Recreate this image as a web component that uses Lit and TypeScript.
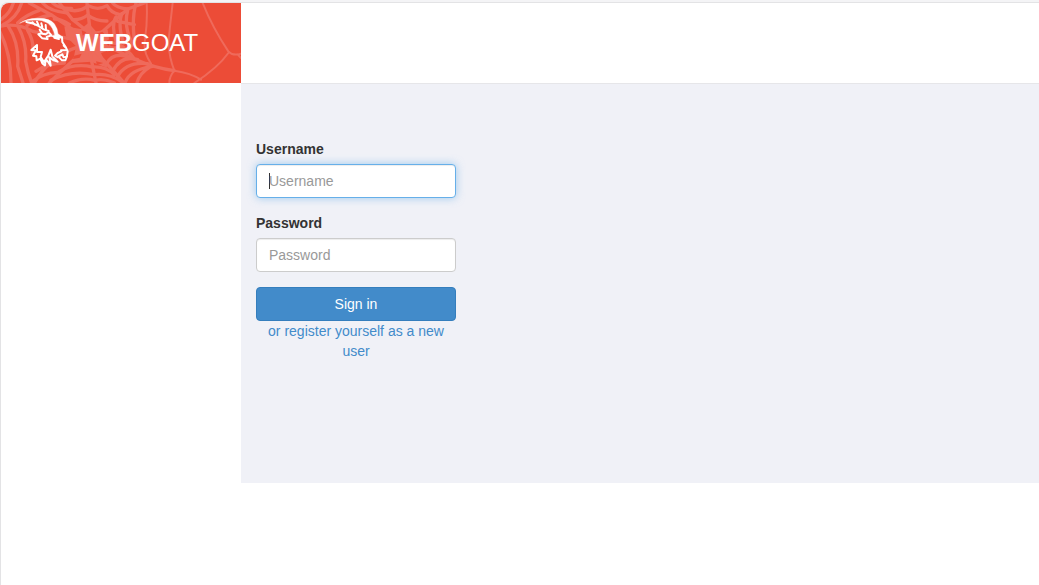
import { LitElement, html, css } from "lit";
import { customElement, query } from "lit/decorators.js";

@customElement("goat-brand")
class GoatBrand extends LitElement {
  static styles = css`
    :host {
      display: block;
      width: 240px;
    }
    .brand {
      display: grid;
      height: 80px;
      background: #ec4c37;
      border-top-left-radius: 8px;
      overflow: hidden;
      color: #fff;
      text-decoration: none;
    }
    .web,
    .mark {
      grid-area: 1 / 1;
      width: 240px;
      height: 80px;
    }
    .web {
      fill: none;
      stroke: #ef6a5b;
      stroke-width: 10;
      stroke-linecap: round;
      stroke-linejoin: round;
    }
    .hub {
      fill: #ef6a5b;
      stroke: none;
    }
    .cell {
      fill: #ec4c37;
      stroke: none;
    }
    .thin {
      stroke-width: 6;
    }
    .mark {
      fill: #fff;
      stroke: #fff;
      stroke-linejoin: round;
    }
    .line {
      fill: none;
      stroke-width: 6;
      stroke-linecap: round;
    }
    .name {
      grid-area: 1 / 1;
      z-index: 1;
      padding-left: 75px;
      font-size: 24px;
      line-height: 80px;
    }
  `;

  render() {
    return html`
      <a class="brand" href="#">
        <svg class="web" viewBox="0 0 720 240" aria-hidden="true">
          <path class="hub" d="M190 70L240 78L262 60L285 85L320 80L325 115L330 140L300 150L320 195L270 176L215 180L225 130L195 100Z" />
          <path d="M0 69Q50 60 95 85L220 110M85 0L150 35L245 100M175 0L215 50L265 90M258 0L268 90M300 90L380 18M430 0L380 18M280 110L400 168Q460 195 520 203M270 130L370 240M265 140L285 240M255 140Q205 180 145 240M235 130Q145 160 100 240" />
          <path d="M0 50Q28 30 37 0M5 66Q48 45 62 0M-4 85Q30 150 30 240M22 70Q55 120 50 190L66 240M52 72Q78 120 74 175Q80 210 92 240M80 82Q100 115 95 150" />
          <path d="M50 60Q75 35 115 22M78 68Q100 45 150 36M125 0Q145 25 200 30M155 0Q175 18 212 16M160 48Q180 48 205 64M215 50Q240 52 260 36Q285 55 318 54" />
          <path d="M200 20Q235 30 262 8Q290 24 318 8Q330 30 355 34M335 0Q345 14 380 18M345 42Q330 65 345 115M362 32Q350 70 368 120M380 22Q368 70 392 118" />
          <path d="M310 128Q345 108 375 140M320 140Q370 120 400 168M315 185Q335 145 385 162M335 205Q360 155 410 170M350 220Q375 175 440 182M372 240Q385 200 455 190M408 240Q415 210 450 190" />
          <path d="M175 205Q220 180 275 192Q315 190 340 215M150 232Q210 200 280 215Q325 210 362 236M205 240Q245 222 282 232Q310 225 340 240M105 205Q140 180 190 180M95 235Q125 210 170 208" />
          <path class="cell" d="M242 82L256 88L245 98ZM287 92L304 86L313 96L300 102ZM310 118L326 108L324 128ZM285 175L307 180L288 186ZM220 158L242 152L236 164L216 168Z" />
          <path d="M405 0Q392 45 400 110M402 110Q390 130 375 155M350 55L400 65" />
          <path class="thin" d="M437 0Q440 55 432 110Q425 145 450 182M515 0Q508 60 502 120Q505 165 520 203Q505 220 505 240M605 0Q635 75 682 145Q695 160 720 152M682 150Q650 195 580 240M520 203Q570 210 600 230M710 154L720 165" />
        </svg>
        <svg class="mark" viewBox="0 0 720 240" aria-hidden="true">
          <path d="M56 61Q78 45 112 46Q145 45 160 62Q170 76 171 92L184 101L182 106L160 104L149 99L161 97Q157 74 141 61Q124 50 99 51Q75 51 56 61Z" />
          <path class="line" d="M76 57Q98 60 112 69L128 79L143 84M94 58L102 65M108 56L113 67M121 61L124 73M134 66L135 80" />
          <path class="line" d="M116 80L123 91L112 94L124 106L140 108M124 92L134 94L143 87L151 97L137 102M160 104L174 108M183 103L184 117L195 134L200 145L198 158M180 142L195 141M188 128L194 134" />
          <path class="line" d="M181 145L170 150L162 158L169 162L184 154L188 163L198 160L193 172L183 172L175 164M108 126L91 141L105 142L96 158L106 160L107 172L118 167L124 181L132 187L135 168L149 188L145 163L158 172L170 176L154 160L149 140L142 158L129 177L119 162L123 147L108 147Z" />
        </svg>
        <span class="name"><b>WEB</b>GOAT</span>
      </a>
    `;
  }
}

@customElement("login-form")
class LoginForm extends LitElement {
  static styles = css`
    :host {
      display: block;
      width: 200px;
    }
    * {
      box-sizing: border-box;
    }
    .form,
    .group {
      display: flex;
      flex-direction: column;
    }
    .group {
      margin-bottom: 15px;
    }
    .label {
      margin-bottom: 5px;
      font-weight: 700;
    }
    .control {
      width: 100%;
      height: 34px;
      padding: 6px 12px;
      border: 1px solid #ccc;
      border-radius: 4px;
      background: #fff;
      box-shadow: inset 0 1px 1px rgba(0, 0, 0, 0.075);
      color: #555;
      font: inherit;
    }
    .control::placeholder {
      color: #999;
      opacity: 1;
    }
    .control:focus {
      outline: 0;
      border-color: #66afe9;
      box-shadow: inset 0 1px 1px rgba(0, 0, 0, 0.075),
        0 0 8px rgba(102, 175, 233, 0.6);
    }
    /* A steady caret in the empty focused field */
    .control:focus:placeholder-shown {
      caret-color: transparent;
      background: linear-gradient(#333, #333) 12px center / 1px 16px no-repeat #fff;
    }
    .submit {
      height: 34px;
      border: 1px solid #357ebd;
      border-radius: 4px;
      background: #428bca;
      color: #fff;
      font: inherit;
      cursor: pointer;
    }
    .register {
      padding: 0 12px;
      color: #428bca;
      text-align: center;
      text-decoration: none;
    }
  `;

  @query("#username") username!: HTMLInputElement;

  firstUpdated() {
    this.username.focus();
  }

  render() {
    return html`
      <form class="form" @submit=${(e: Event) => e.preventDefault()}>
        <div class="group">
          <label class="label" for="username">Username</label>
          <input class="control" id="username" type="text" placeholder="Username" />
        </div>
        <div class="group">
          <label class="label" for="password">Password</label>
          <input class="control" id="password" type="password" placeholder="Password" />
        </div>
        <button class="submit" type="submit">Sign in</button>
        <a class="register" href="#">or register yourself as a new user</a>
      </form>
    `;
  }
}

@customElement("app-root")
class AppRoot extends LitElement {
  static styles = css`
    :host {
      display: block;
      box-sizing: border-box;
      min-height: 100vh;
      padding-top: 2px;
      background: #f4f4f6;
      color: #333;
      font: 14px/20px "Liberation Sans", Arial, sans-serif;
    }
    .window {
      box-sizing: border-box;
      min-height: calc(100vh - 2px);
      border: solid #e3e3e5;
      border-width: 1px 0 0 1px;
      border-top-left-radius: 8px;
      background: #fff;
    }
    .main {
      min-height: 400px;
      box-sizing: border-box;
      margin-left: 240px;
      padding: 55px 15px;
      border-top: 1px solid #e6e6e9;
      background: #f0f1f7;
    }
  `;

  render() {
    return html`
      <div class="window">
        <header><goat-brand></goat-brand></header>
        <main class="main"><login-form></login-form></main>
      </div>
    `;
  }
}
